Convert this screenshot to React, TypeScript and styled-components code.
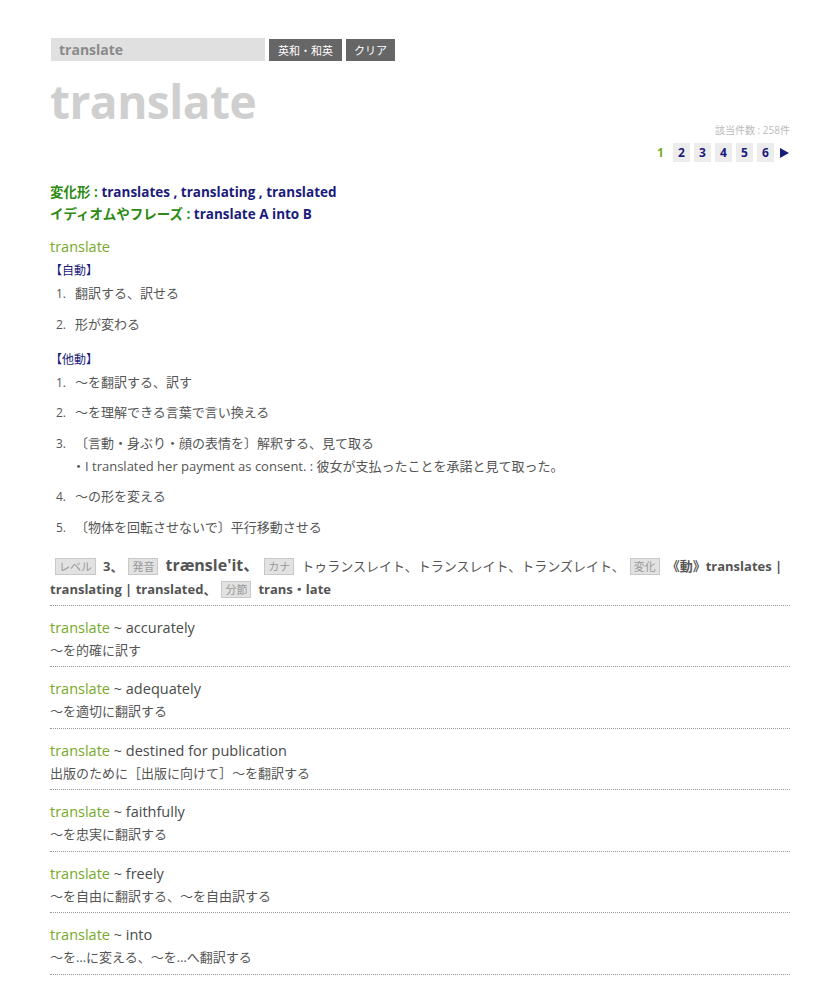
import React from "react";
import styled, { createGlobalStyle } from "styled-components";

const GlobalStyle = createGlobalStyle`
    body {
        margin: 0;
        background: #fff;
        font-family: "Open Sans", "Noto Sans CJK JP", sans-serif;
        color: #555;
    }
`;

const Page = styled.div`
    width: 740px;
    padding: 38px 0 10px 50px;
`;

const SearchRow = styled.div`
    display: flex;
    align-items: center;
    gap: 4px;
    margin-left: 1px;
`;
const SearchBox = styled.div`
    width: 206px;
    height: 23px;
    background: #e0e0e0;
    padding-left: 8px;
    display: flex;
    align-items: center;
    font-size: 14px;
    font-weight: 700;
    color: #8a8a8a;
`;
const GrayButton = styled.button<{ pad: number }>`
    height: 22px;
    background: #666;
    color: #fff;
    border: none;
    padding: 0 ${(p) => p.pad}px;
    font-family: "Noto Sans CJK JP", sans-serif;
    font-size: 11px;
    line-height: 22px;
`;

const BigTitle = styled.h1`
    margin: 14px 0 0 0;
    font-size: 46px;
    line-height: 52px;
    font-weight: 700;
    color: #cfcfcf;
    letter-spacing: -0.5px;
`;
const Count = styled.div`
    text-align: right;
    font-size: 10px;
    color: #bbb;
    line-height: 14px;
    margin-top: -4px;
`;
const Pager = styled.div`
    display: flex;
    justify-content: flex-end;
    align-items: center;
    gap: 4px;
    margin-top: 6px;
`;
const PageNum = styled.span<{ current?: boolean }>`
    min-width: 17px;
    height: 19px;
    display: flex;
    align-items: center;
    justify-content: center;
    font-size: 12px;
    font-weight: 700;
    color: ${(p) => (p.current ? "#77a82a" : "#1b1b7c")};
    background: ${(p) => (p.current ? "transparent" : "#ececec")};
`;
const NextArrow = styled.span`
    width: 0;
    height: 0;
    border-top: 5px solid transparent;
    border-bottom: 5px solid transparent;
    border-left: 9px solid #1b1b7c;
    margin-left: 2px;
    margin-right: 1px;
`;

const Forms = styled.div`
    margin-top: 19px;
`;
const FormLine = styled.div`
    font-size: 13.5px;
    line-height: 22px;
    font-weight: 700;
`;
const FormLabel = styled.span`
    color: #2e8a13;
`;
const FormValue = styled.span`
    color: #1b1b7c;
`;

const Headword = styled.div`
    margin-top: 11px;
    font-size: 14.5px;
    line-height: 22px;
    color: #77a82a;
`;
const PosLabel = styled.div<{ gap: number }>`
    margin-top: ${(p) => p.gap}px;
    font-size: 12px;
    line-height: 22px;
    color: #1b1b7c;
`;
const Senses = styled.ol`
    list-style: none;
    margin: 0;
    padding: 0 0 0 6px;
`;
const Sense = styled.li`
    font-size: 13px;
    line-height: 23px;
    margin-bottom: 7.5px;
    color: #555;
    & > b {
        font-weight: 400;
        font-size: 12px;
        margin-right: 9px;
    }
`;
const Example = styled.div`
    padding-left: 16px;
    line-height: 23px;
`;

const InfoBlock = styled.div`
    margin-top: 16px;
    padding: 0 0 4px 0;
    border-bottom: 1px dotted #999;
    font-size: 13px;
    line-height: 23px;
    color: #555;
`;
const Tag = styled.span`
    display: inline-block;
    font-size: 11px;
    font-weight: 400;
    line-height: 13px;
    padding: 1px 3px;
    background: #e2e2e2;
    border: 1px solid #c8c8c8;
    color: #999;
    margin: 0 7px 0 5px;
`;
const Value = styled.span<{ bold?: boolean; big?: boolean }>`
    font-weight: ${(p) => (p.bold ? 700 : 400)};
    font-size: ${(p) => (p.big ? 16 : 13)}px;
    line-height: 18px;
`;

const Phrase = styled.div`
    border-bottom: 1px dotted #999;
    padding: 10px 0 4.5px;
`;
const PhraseHead = styled.div`
    font-size: 14.5px;
    line-height: 23px;
    color: #4a4a4a;
    & > em {
        font-style: normal;
        color: #77a82a;
    }
`;
const PhraseMeaning = styled.div`
    font-size: 13px;
    line-height: 23px;
    color: #555;
`;

const phrases = [
    ["accurately", "～を的確に訳す"],
    ["adequately", "～を適切に翻訳する"],
    ["destined for publication", "出版のために［出版に向けて］～を翻訳する"],
    ["faithfully", "～を忠実に翻訳する"],
    ["freely", "～を自由に翻訳する、～を自由訳する"],
    ["into", "～を…に変える、～を…へ翻訳する"],
];

const App: React.FC = () => {
    return (
        <Page>
            <GlobalStyle />
            <SearchRow>
                <SearchBox>translate</SearchBox>
                <GrayButton pad={9}>英和・和英</GrayButton>
                <GrayButton pad={8}>クリア</GrayButton>
            </SearchRow>
            <BigTitle>translate</BigTitle>
            <Count>該当件数 : 258件</Count>
            <Pager>
                <PageNum current>1</PageNum>
                {[2, 3, 4, 5, 6].map((n) => (
                    <PageNum key={n}>{n}</PageNum>
                ))}
                <NextArrow />
            </Pager>
            <Forms>
                <FormLine>
                    <FormLabel>変化形 : </FormLabel>
                    <FormValue>translates , translating , translated</FormValue>
                </FormLine>
                <FormLine>
                    <FormLabel>イディオムやフレーズ : </FormLabel>
                    <FormValue>translate A into B</FormValue>
                </FormLine>
            </Forms>
            <Headword>translate</Headword>
            <PosLabel gap={2}>【自動】</PosLabel>
            <Senses>
                <Sense><b>1.</b>翻訳する、訳せる</Sense>
                <Sense><b>2.</b>形が変わる</Sense>
            </Senses>
            <PosLabel gap={13}>【他動】</PosLabel>
            <Senses>
                <Sense><b>1.</b>～を翻訳する、訳す</Sense>
                <Sense><b>2.</b>～を理解できる言葉で言い換える</Sense>
                <Sense>
                    <b>3.</b>〔言動・身ぶり・顔の表情を〕解釈する、見て取る
                    <Example>・I translated her payment as consent. : 彼女が支払ったことを承諾と見て取った。</Example>
                </Sense>
                <Sense><b>4.</b>～の形を変える</Sense>
                <Sense><b>5.</b>〔物体を回転させないで〕平行移動させる</Sense>
            </Senses>
            <InfoBlock>
                <Tag>レベル</Tag>
                <Value bold>3、</Value>
                <Tag>発音</Tag>
                <Value bold big>trænsle'it、</Value>
                <Tag>カナ</Tag>
                <Value>トゥランスレイト、トランスレイト、トランズレイト、</Value>
                <Tag>変化</Tag>
                <Value bold>《動》translates | </Value>
                <Value bold>translating | translated、</Value>
                <Tag>分節</Tag>
                <Value bold>trans・late</Value>
            </InfoBlock>
            {phrases.map(([en, ja]) => (
                <Phrase key={en}>
                    <PhraseHead><em>translate</em> ~ {en}</PhraseHead>
                    <PhraseMeaning>{ja}</PhraseMeaning>
                </Phrase>
            ))}
        </Page>
    );
};

export default App;
